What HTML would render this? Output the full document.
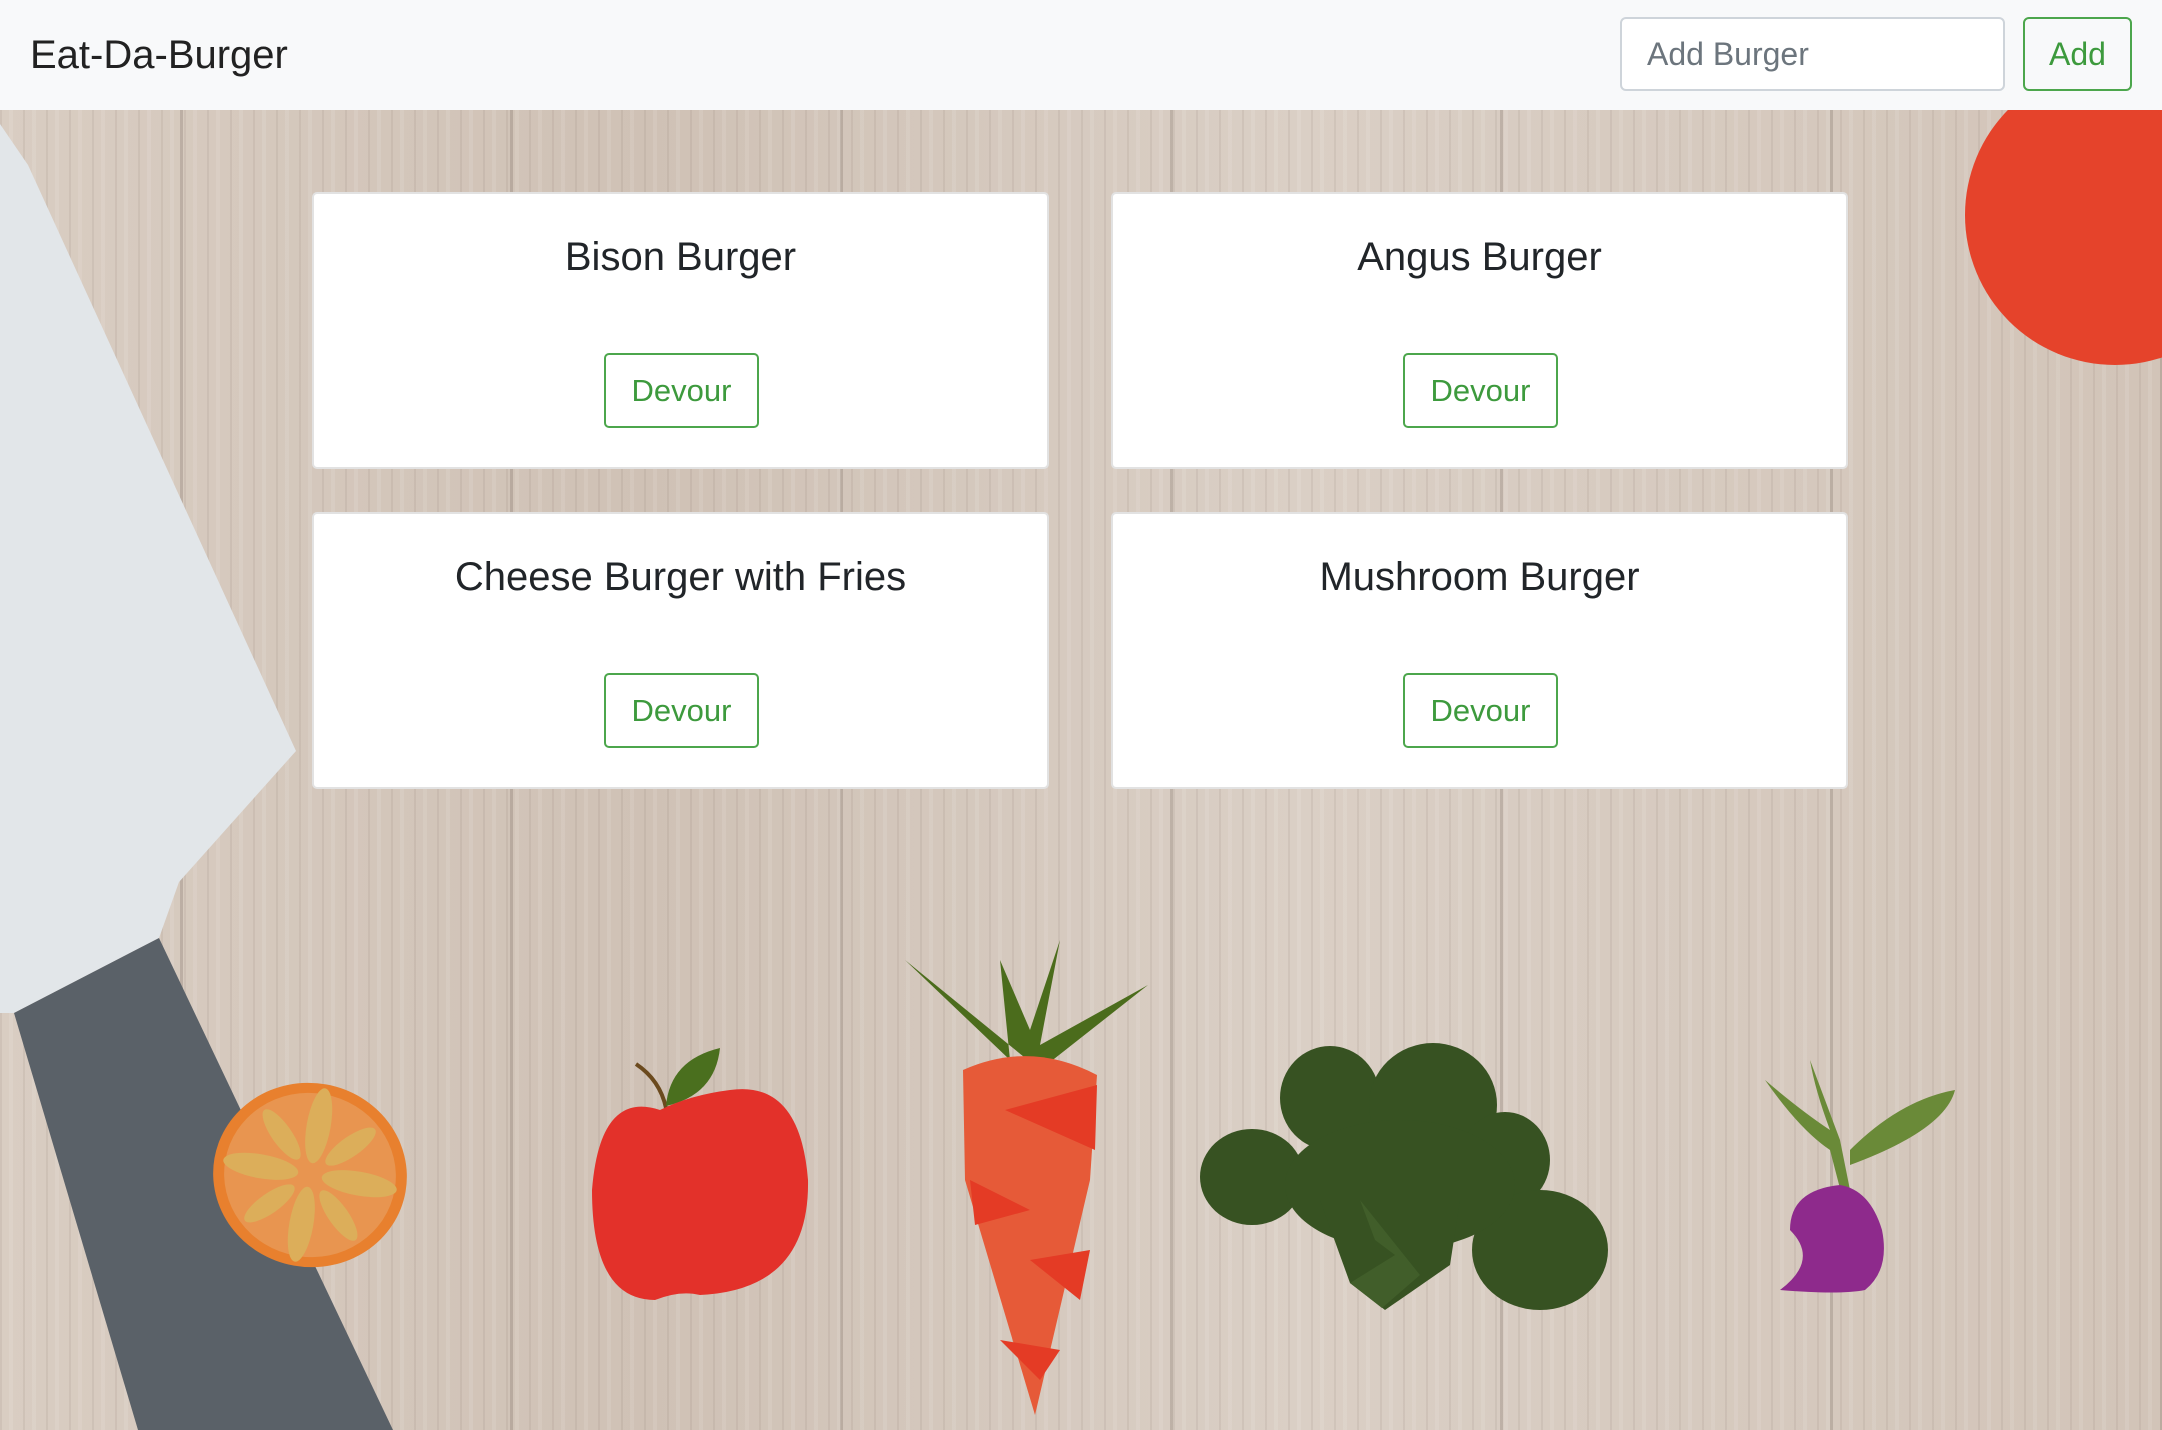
<!DOCTYPE html>
<html><head><meta charset="utf-8"><style>
*{box-sizing:border-box;margin:0;padding:0}
html,body{width:2162px;height:1430px;overflow:hidden;font-family:"Liberation Sans",Arial,sans-serif}
body{position:relative;background:#d7cabe;
background-image:
repeating-linear-gradient(90deg,rgba(120,100,90,.10) 0 2px,transparent 2px 9px,rgba(255,255,255,.10) 9px 13px,transparent 13px 23px),
repeating-linear-gradient(90deg,transparent 0 180px,rgba(110,95,85,.25) 180px 183px,transparent 183px 330px),
linear-gradient(90deg,#d9cdc2,#cfc1b5 30%,#dacfc5 60%,#d2c4b8);}
.nav{position:absolute;left:0;top:0;width:2162px;height:110px;background:#f8f9fa;z-index:3}
.brand{position:absolute;left:30px;top:31px;font-size:40px;color:#222;line-height:1.2}
.inp{position:absolute;left:1620px;top:17px;width:385px;height:74px;border:2px solid #ced4da;border-radius:6px;background:#fff;font-size:32px;color:#6c757d;padding-left:25px;line-height:70px}
.add{position:absolute;left:2023px;top:17px;width:109px;height:74px;border:2px solid #4ca64c;border-radius:6px;font-size:32px;color:#3d9a3d;text-align:center;line-height:70px}
.card{position:absolute;width:737px;height:277px;background:#fff;border:2px solid #e2e2e2;border-radius:5px;text-align:center;z-index:2}
.card h5{font-weight:normal;font-size:40px;color:#212529;margin-top:39px;line-height:1.2}
.btn{position:absolute;left:290px;top:159px;width:155px;height:75px;border:2px solid #4ca64c;border-radius:5px;font-size:31px;color:#3d9a3d;line-height:71px}
svg{position:absolute;left:0;top:0;z-index:1}
</style></head><body>
<svg width="2162" height="1430" viewBox="0 0 2162 1430">
<circle cx="2115" cy="215" r="150" fill="#e5432b"/>
<polygon points="0,124 28,165 296,751 179,882 159,938 14,1013 0,1013" fill="#e2e6e9"/>
<polygon points="14,1013 159,938 393,1430 138,1430" fill="#5a6168"/>
<g transform="rotate(10 310 1175)">
<ellipse cx="310" cy="1175" rx="97" ry="92" fill="#e8802e"/>
<ellipse cx="310" cy="1175" rx="86" ry="82" fill="#e89550"/>
<g fill="#dcae5a">
<ellipse cx="310" cy="1125" rx="12" ry="38"/><ellipse cx="310" cy="1225" rx="12" ry="38"/>
<ellipse cx="260" cy="1175" rx="38" ry="12"/><ellipse cx="360" cy="1175" rx="38" ry="12"/>
<ellipse cx="275" cy="1140" rx="10" ry="30" transform="rotate(-45 275 1140)"/>
<ellipse cx="345" cy="1210" rx="10" ry="30" transform="rotate(-45 345 1210)"/>
<ellipse cx="345" cy="1140" rx="10" ry="30" transform="rotate(45 345 1140)"/>
<ellipse cx="275" cy="1210" rx="10" ry="30" transform="rotate(45 275 1210)"/></g></g>
<path d="M636,1064 Q660,1080 666,1108" stroke="#6b4a1e" stroke-width="4" fill="none"/>
<path d="M666,1106 Q670,1060 720,1048 Q715,1095 666,1106Z" fill="#4a6f1e"/>
<path d="M660,1110 Q600,1090 592,1190 Q592,1300 655,1300 Q680,1290 700,1295 Q810,1290 808,1180 Q800,1080 730,1090 Q690,1095 660,1110Z" fill="#e3312a"/>
<path d="M905,960 L1010,1060 L1000,960 L1030,1030 L1060,940 L1040,1045 L1148,985 L1040,1070 Z" fill="#4b6c1c"/>
<path d="M963,1070 Q1030,1040 1097,1075 L1090,1180 L1035,1415 L965,1180Z" fill="#e65a38"/>
<g fill="#e43b25"><polygon points="1005,1110 1097,1085 1095,1150"/><polygon points="970,1180 1030,1210 975,1225"/><polygon points="1030,1260 1090,1250 1080,1300"/><polygon points="1000,1340 1060,1350 1040,1380"/></g>
<g fill="#375222">
<ellipse cx="1330" cy="1098" rx="50" ry="52"/>
<ellipse cx="1433" cy="1105" rx="64" ry="62"/>
<ellipse cx="1252" cy="1177" rx="52" ry="48"/>
<ellipse cx="1505" cy="1160" rx="45" ry="48"/>
<ellipse cx="1540" cy="1250" rx="68" ry="60"/>
<ellipse cx="1400" cy="1185" rx="115" ry="65"/>
<polygon points="1320,1200 1460,1200 1450,1265 1385,1310 1350,1283"/>
</g>
<path d="M1360,1200 L1375,1240 L1395,1255 L1350,1283 L1382,1308 L1420,1275 Z" fill="#415e2a"/>
<path d="M1810,1060 L1840,1140 L1850,1190 L1843,1200 L1830,1150 Q1800,1130 1765,1080 Q1800,1110 1830,1130 Q1815,1090 1810,1060Z M1850,1150 Q1900,1100 1955,1090 Q1945,1130 1850,1165Z" fill="#6a8a38"/>
<path d="M1840,1185 Q1870,1190 1882,1230 Q1890,1270 1865,1290 Q1840,1295 1780,1290 Q1820,1260 1790,1230 Q1790,1190 1840,1185Z" fill="#8e2a8c"/>
</svg>
<div class="nav"><div class="brand">Eat-Da-Burger</div><div class="inp">Add Burger</div><div class="add">Add</div></div>
<div class="card" style="left:312px;top:192px"><h5>Bison Burger</h5><div class="btn">Devour</div></div>
<div class="card" style="left:1111px;top:192px"><h5>Angus Burger</h5><div class="btn">Devour</div></div>
<div class="card" style="left:312px;top:512px"><h5>Cheese Burger with Fries</h5><div class="btn">Devour</div></div>
<div class="card" style="left:1111px;top:512px"><h5>Mushroom Burger</h5><div class="btn">Devour</div></div>
</body></html>
